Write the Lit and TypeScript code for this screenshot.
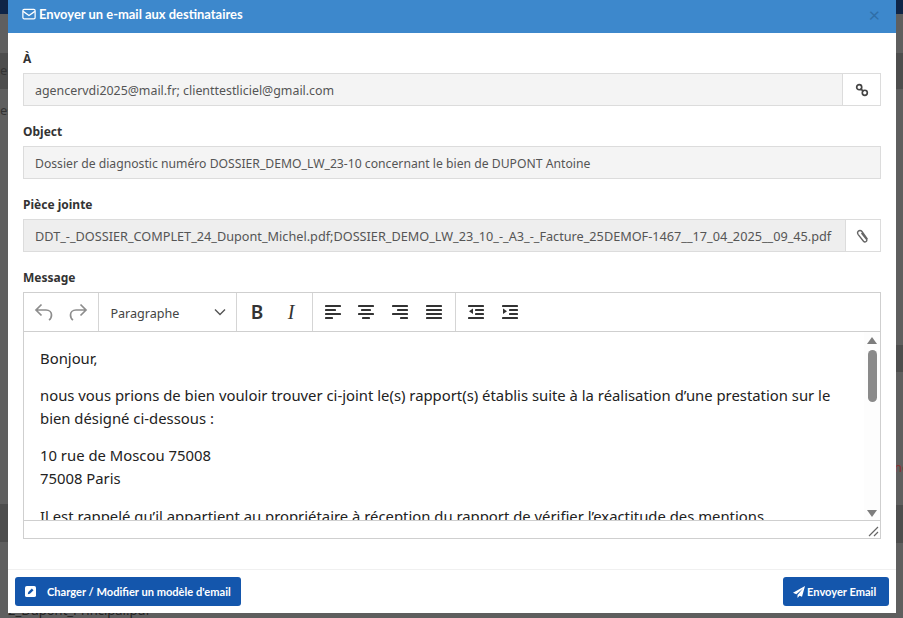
import { LitElement, html, css, svg } from "lit";
import { customElement } from "lit/decorators.js";

const line = (x1: number, x2: number, y: number) => svg`<rect x=${x1} y=${y} width=${x2 - x1} height="2" rx=".4"/>`;
const icon = (body: unknown, cls = "tb-icon") => html`<svg class=${cls} viewBox="0 0 20 20" fill="currentColor">${body}</svg>`;

@customElement("app-root")
export class AppRoot extends LitElement {
  static styles = css`
    :host { display: block; width: 903px; height: 618px; overflow: hidden; background: #5e5e5e; font-family: "Lato", sans-serif; position: relative; }
    * { box-sizing: border-box; }
    .backdrop { position: absolute; inset: 0; display: flex; justify-content: space-between; }
    .side { width: 8px; display: flex; flex-direction: column; }
    .side.right { width: 7px; }
    .navy { height: 14px; background: #0f2547; }
    .g { background: #5f5f5f; }
    .d { background: #4d4d4d; }
    .h39 { height: 39px; } .h36 { height: 36px; } .h256 { height: 256px; } .h27 { height: 27px; } .h133 { height: 133px; } .h38 { height: 38px; } .fill { flex: 1; }
    .h415 { height: 415px; }
    .ghost { position: absolute; font-family: "Noto Sans", sans-serif; font-size: 13px; line-height: 16px; color: #333; white-space: nowrap; }
    .g1 { left: 0; top: 62px; }
    .g2 { left: 0; top: 102px; }
    .g3 { left: 894px; top: 459px; color: #8a2f2f; }
    .g4 { left: 8px; top: 602px; color: #222; }
    .modal { position: absolute; left: 8px; top: 0; width: 888px; height: 613px; background: #fff; display: flex; flex-direction: column; }
    .head { height: 33px; flex: none; background: #3d88cc; color: #fff; display: flex; align-items: center; padding: 0 14px 6px; gap: 3px; font-size: 12.95px; font-weight: 700; }
    .head svg { width: 14px; height: 14px; flex: none; }
    .head span { flex: 1; }
    .close { color: #2f6ea8; font-size: 20px; font-weight: 400; line-height: 1; flex: none; margin-right: 2px; }
    .body { flex: 1; padding: 17px 15px 0 15px; display: flex; flex-direction: column; }
    label { display: block; font-family: "Noto Sans", sans-serif; font-size: 12px; font-weight: 700; color: #333; height: 17px; line-height: 17px; margin-bottom: 6px; }
    .group { display: flex; height: 33px; margin-bottom: 17px; }
    .field { flex: 1; min-width: 0; background: #f4f4f4; border: 1px solid #dcdcdc; font-family: "Noto Sans", sans-serif; font-size: 12.4px; color: #555; display: flex; align-items: center; padding: 1px 11px 0; white-space: nowrap; overflow: hidden; }
    .field.f2 { font-size: 12.2px; }
    .field.f3 { font-size: 12.7px; background: #eeeeee; }
    .addon { flex: none; width: 38px; border: 1px solid #dcdcdc; border-left: 0; display: flex; align-items: center; justify-content: center; color: #444; }
    .addon.clip { width: 35px; color: #666; }
    .addon svg { width: 14px; height: 14px; }
    .editor { border: 1px solid #cfcfcf; height: 247px; display: flex; flex-direction: column; }
    .toolbar { height: 39px; flex: none; display: flex; border-bottom: 1px solid #cfcfcf; color: #333; }
    .tb-group { display: flex; align-items: center; border-right: 1px solid #d5d5d5; padding: 0 4px 0 3px; }
    .tb-group.last { border-right: 0; padding-left: 4px; }
    .tb-btn { width: 33.7px; display: flex; justify-content: center; }
    .tb-icon { width: 20px; height: 20px; }
    .tb-icon.muted { color: #8d8d8d; }
    .select { width: 138px; padding: 2px 0 0 11px; font-family: "Noto Sans", sans-serif; font-size: 12.6px; color: #444; justify-content: space-between; }
    .select svg { width: 14px; height: 14px; margin: -2px 9px 0 0; color: #555; }
    .content-wrap { height: 189px; flex: none; display: flex; border-bottom: 1px solid #cfcfcf; overflow: hidden; }
    .content { flex: 1; padding: 15px 0 0 16px; font-family: "Noto Sans", sans-serif; font-size: 14.85px; line-height: 23px; color: #222; overflow: hidden; }
    .content p { margin: 0 0 14px; padding-right: 18px; }
    .content p:nth-child(3) { margin-bottom: 15px; }
    .scroll { width: 16px; flex: none; display: flex; flex-direction: column; align-items: center; position: relative; background: #fdfdfd; }
    .arrow { width: 0; height: 0; border-left: 5px solid transparent; border-right: 5px solid transparent; margin-top: 5px; }
    .up { border-bottom: 7px solid #7d7d7d; }
    .thumb { width: 9px; height: 52px; background: #8a8a8a; border-radius: 5px; margin-top: 6px; }
    .down { border-top: 7px solid #7d7d7d; margin-top: auto; margin-bottom: 3px; }
    .status { flex: 1; display: flex; justify-content: flex-end; align-items: flex-end; color: #666; }
    .status svg { width: 11px; height: 11px; margin: 0 1px 1px 0; }
    .foot { height: 44px; flex: none; margin-top: 30px; border-top: 1px solid #f0f0f0; display: flex; justify-content: space-between; padding: 7px 7px 0 7px; }
    .btn { height: 29px; background: #1456ac; color: #fff; border-radius: 3px; font-size: 11.1px; font-weight: 700; display: flex; align-items: center; white-space: nowrap; }
    .btn svg { flex: none; }
    .b1 { width: 226px; padding-left: 10px; gap: 11px; }
    .b1 svg { width: 11px; height: 11px; }
    .b2 { width: 106px; padding-left: 10px; gap: 2px; }
    .b2 svg { width: 12px; height: 12px; }
  `;

  render() {
    const link = svg`<g fill="none" stroke="currentColor" stroke-width="2.4"><circle cx="6" cy="6" r="3.6"/><circle cx="14" cy="14" r="3.6"/><path d="M8 8l4 4"/></g>`;
    const clip = svg`<path fill="none" stroke="currentColor" stroke-width="2" stroke-linecap="round" d="M16 14 8.500 3.600C7 1.600 4.300 2 3.200 3.200 2 4.500 2.100 6.500 3.200 8l7.500 9.500c1 1.200 2.600 1.300 3.700.4 1.100-.9 1.200-2.500.3-3.700L8.300 6.500"/>`;
    return html`
      <div class="backdrop">
        <div class="side"><div class="navy"></div><div class="g h39"></div><div class="d h36"></div><div class="g h415"></div><div class="d h38"></div><div class="g fill"></div></div>
        <div class="side right"><div class="navy"></div><div class="g h39"></div><div class="d h36"></div><div class="g h256"></div><div class="d h27"></div><div class="g h133"></div><div class="d h38"></div><div class="g fill"></div></div>
        <span class="ghost g1">e</span><span class="ghost g2">es</span><span class="ghost g3">né</span><span class="ghost g4">2_Dupont_Principal.pdf</span>
      </div>
      <div class="modal">
        <div class="head">
          <svg viewBox="0 0 16 16" fill="none" stroke="currentColor" stroke-width="1.4"><rect x="1" y="2.700" width="14" height="10.800" rx="1.500"/><path d="M1.300 5l6.700 4.700L14.700 5"/></svg>
          <span>Envoyer un e-mail aux destinataires</span>
          <div class="close">×</div>
        </div>
        <div class="body">
          <label>À</label>
          <div class="group"><div class="field">agencervdi2025@mail.fr; clienttestliciel@gmail.com</div><div class="addon"><svg viewBox="0 0 20 20">${link}</svg></div></div>
          <label>Object</label>
          <div class="group"><div class="field f2">Dossier de diagnostic numéro DOSSIER_DEMO_LW_23-10 concernant le bien de DUPONT Antoine</div></div>
          <label>Pièce jointe</label>
          <div class="group"><div class="field f3">DDT_-_DOSSIER_COMPLET_24_Dupont_Michel.pdf;DOSSIER_DEMO_LW_23_10_-_A3_-_Facture_25DEMOF-1467__17_04_2025__09_45.pdf</div><div class="addon clip"><svg viewBox="0 0 20 20">${clip}</svg></div></div>
          <label>Message</label>
          <div class="editor">
            <div class="toolbar">
              <div class="tb-group">
                <div class="tb-btn">${icon(svg`<path fill="none" stroke="currentColor" stroke-width="1.700" d="M7.500 2.500 2 8l5.500 5.500M2.500 8H12c3.500 0 5.500 2.500 5.500 5s-1 4-2.500 5"/>`, "tb-icon muted")}</div>
                <div class="tb-btn">${icon(svg`<path fill="none" stroke="currentColor" stroke-width="1.700" d="M12.500 2.500 18 8l-5.500 5.500M17.500 8H8c-3.500 0-5.500 2.500-5.500 5s1 4 2.500 5"/>`, "tb-icon muted")}</div>
              </div>
              <div class="tb-group select"><span>Paragraphe</span><svg viewBox="0 0 14 14" fill="none" stroke="currentColor" stroke-width="1.400"><path d="M2 4.500l5 5 5-5"/></svg></div>
              <div class="tb-group">
                <div class="tb-btn">${icon(svg`<text x="10" y="16.500" text-anchor="middle" font-family="Noto Sans" font-weight="600" font-size="19">B</text>`)}</div>
                <div class="tb-btn">${icon(svg`<text x="10" y="16.500" text-anchor="middle" font-family="Liberation Serif" font-style="italic" font-size="20">I</text>`)}</div>
              </div>
              <div class="tb-group">
                <div class="tb-btn">${icon(svg`${line(2, 18, 3)}${line(2, 13, 7)}${line(2, 18, 11)}${line(2, 10, 15)}`)}</div>
                <div class="tb-btn">${icon(svg`${line(2, 18, 3)}${line(5, 15, 7)}${line(2, 18, 11)}${line(6, 14, 15)}`)}</div>
                <div class="tb-btn">${icon(svg`${line(2, 18, 3)}${line(7, 18, 7)}${line(2, 18, 11)}${line(10, 18, 15)}`)}</div>
                <div class="tb-btn">${icon(svg`${line(2, 18, 3)}${line(2, 18, 7)}${line(2, 18, 11)}${line(2, 18, 15)}`)}</div>
              </div>
              <div class="tb-group last">
                <div class="tb-btn">${icon(svg`${line(2, 18, 3)}${line(9, 18, 7)}${line(9, 18, 11)}${line(2, 18, 15)}<path d="M7 6.500v5.500L3 9.250z"/>`)}</div>
                <div class="tb-btn">${icon(svg`${line(2, 18, 3)}${line(9, 18, 7)}${line(9, 18, 11)}${line(2, 18, 15)}<path d="M3 6.500v5.500l4-2.750z"/>`)}</div>
              </div>
            </div>
            <div class="content-wrap">
              <div class="content">
                <p>Bonjour,</p>
                <p>nous vous prions de bien vouloir trouver ci-joint le(s) rapport(s) établis suite à la réalisation d’une prestation sur le bien désigné ci-dessous :</p>
                <p>10 rue de Moscou 75008<br />75008 Paris</p>
                <p>Il est rappelé qu’il appartient au propriétaire à réception du rapport de vérifier l’exactitude des mentions</p>
              </div>
              <div class="scroll"><div class="arrow up"></div><div class="thumb"></div><div class="arrow down"></div></div>
            </div>
            <div class="status"><svg viewBox="0 0 11 11" fill="none" stroke="currentColor" stroke-width="1.200"><path d="M1 10 10 1M6 10l4-4"/></svg></div>
          </div>
        </div>
        <div class="foot">
          <div class="btn b1"><svg viewBox="0 0 12 12"><rect width="12" height="12" rx="2" fill="#fff"/><path d="M3 9l.6-2.400L7.500 2.700l1.800 1.800L5.400 8.400z" fill="#1456ac"/></svg>Charger / Modifier un modèle d'email</div>
          <div class="btn b2"><svg viewBox="0 0 12 12" fill="#fff"><path d="M12 0 0 6.800l3.300 1.400L10 2.500 4.500 9v3l2-2.300 2.500 1z"/></svg>Envoyer Email</div>
        </div>
      </div>
    `;
  }
}
